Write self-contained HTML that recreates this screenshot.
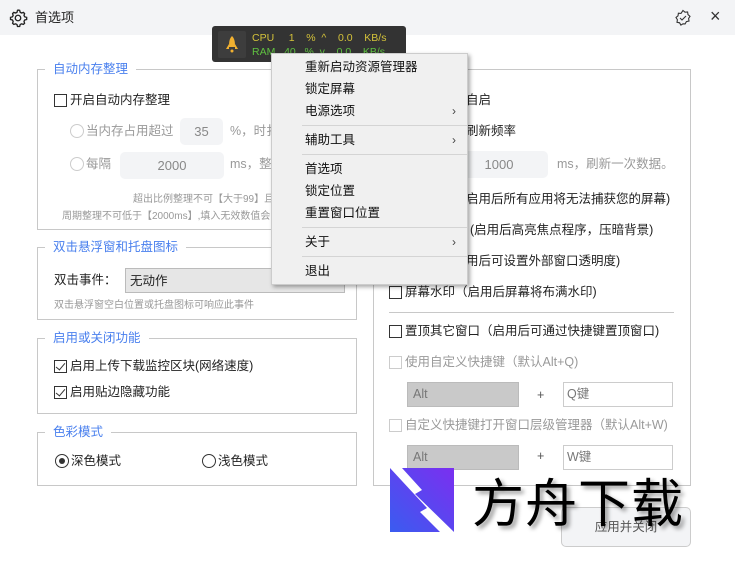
<!DOCTYPE html>
<html><head><meta charset="utf-8"><style>
*{margin:0;padding:0;box-sizing:border-box}
body{width:735px;height:579px;background:#fff;font-family:"Liberation Sans","Noto Sans CJK SC",sans-serif;font-size:12.5px;line-height:16px;color:#222;position:relative;overflow:hidden}
.a{position:absolute;white-space:nowrap}
.hdr{position:absolute;left:0;top:0;width:735px;height:35px;background:#f3f4f6}
.grp{position:absolute;border:1px solid #c8c8c8}
.gt{position:absolute;background:#fff;color:#4a80ee;font-size:12.5px;padding:0 8px;white-space:nowrap}
.cb{position:absolute;width:13px;height:13px;border:1px solid #333;background:#fff}
.cb.g{border-color:#ccc}
.cb.k::after{content:"";position:absolute;left:3px;top:0px;width:4px;height:8px;border:solid #333;border-width:0 1.3px 1.3px 0;transform:rotate(40deg)}
.rd{position:absolute;width:14px;height:14px;border:1px solid #333;border-radius:50%;background:#fff}
.rd.g{border-color:#ccc}
.rd.on::after{content:"";position:absolute;left:3px;top:3px;width:6px;height:6px;border-radius:50%;background:#333}
.inp{position:absolute;background:#f3f4f6;border-radius:5px;color:#888;text-align:center;font-size:13px}
.gray{color:#999}
.menu{position:absolute;left:271px;top:53px;width:197px;height:232px;background:#f0f0f0;border:1px solid #ccc;box-shadow:2px 2px 4px rgba(0,0,0,.35)}
.mi{position:absolute;left:33px;font-size:12.5px;color:#111}
.ar{position:absolute;left:180px;color:#444;font-size:12px}
.sep{position:absolute;left:30px;width:165px;height:1px;background:#d4d4d4}
.sel{position:absolute;background:#c9c9c9;border:1px solid #bbb;color:#777;padding-left:5px;font-size:12.5px}
.box{position:absolute;border:1px solid #ccc;background:#fff;color:#777;padding-left:3px;font-size:12.5px}
</style></head><body>
<div class="hdr"></div>
<svg class="a" style="left:8px;top:8px" width="20" height="20" viewBox="0 0 24 24" fill="none" stroke="#222" stroke-width="1.6"><path d="M12 2.5l2 .3.6 2.3 1.6.9 2.3-.7 1.4 1.4-.7 2.3.9 1.6 2.3.6v2.6l-2.3.6-.9 1.6.7 2.3-1.4 1.4-2.3-.7-1.6.9-.6 2.3h-2.6l-.6-2.3-1.6-.9-2.3.7-1.4-1.4.7-2.3-.9-1.6-2.3-.6v-2.6l2.3-.6.9-1.6-.7-2.3 1.4-1.4 2.3.7 1.6-.9.6-2.3z"/><circle cx="12" cy="12" r="3.3"/></svg>
<div class="a" style="left:35px;top:10px;font-size:13px">首选项</div>
<svg class="a" style="left:674px;top:9px" width="18" height="18" viewBox="0 0 18 18" fill="none" stroke="#333" stroke-width="1.1"><path d="M9 1.5l2 1.7 2.6-.2.4 2.6 2 1.7-1.4 2.2.4 2.6-2.6.5-1.3 2.3L9 14.8l-2.1 1.3-1.3-2.3-2.6-.5.4-2.6L2 8.5 4 6.8 4.4 4.2 7 4.4z"/><path d="M6 9l2 2 4-4"/></svg>
<div class="a" style="left:710px;top:8px;font-size:18px;color:#333">×</div>

<!-- monitor -->
<div class="a" style="left:212px;top:26px;width:194px;height:36px;background:#333;border-radius:3px"></div>
<div class="a" style="left:218px;top:31px;width:28px;height:27px;background:#3d3d3d;border-radius:2px"></div>
<svg class="a" style="left:225px;top:35px" width="14" height="19" viewBox="0 0 14 19"><path d="M7 1C10 4 10 8 10 12H4C4 8 4 4 7 1z" fill="#f0b030"/><path d="M4 9L1 14h3zM10 9l3 5h-3z" fill="#f0b030"/><circle cx="7" cy="16" r="1.5" fill="#f0b030"/></svg>
<div class="a" style="left:252px;top:32px;color:#d4c23a;font-size:10.5px;line-height:13px">CPU&nbsp;&nbsp;&nbsp;&nbsp;&nbsp;1&nbsp;&nbsp;&nbsp;&nbsp;%&nbsp;&nbsp;^&nbsp;&nbsp;&nbsp;&nbsp;0.0&nbsp;&nbsp;&nbsp;&nbsp;KB/s</div>
<div class="a" style="left:252px;top:46px;color:#5fc040;font-size:10.5px;line-height:13px">RAM&nbsp;&nbsp;&nbsp;40&nbsp;&nbsp;&nbsp;%&nbsp;&nbsp;v&nbsp;&nbsp;&nbsp;&nbsp;0.0&nbsp;&nbsp;&nbsp;&nbsp;KB/s</div>

<!-- left group 1 -->
<div class="grp" style="left:37px;top:69px;width:320px;height:161px"></div>
<div class="gt" style="left:45px;top:61px">自动内存整理</div>
<div class="cb" style="left:54px;top:94px"></div><div class="a" style="left:70px;top:92px">开启自动内存整理</div>
<div class="rd g" style="left:70px;top:124px"></div><div class="a gray" style="left:86px;top:123px">当内存占用超过</div>
<div class="inp" style="left:180px;top:118px;width:43px;height:27px;line-height:27px">35</div>
<div class="a gray" style="left:230px;top:123px">%，时扌</div>
<div class="rd g" style="left:70px;top:157px"></div><div class="a gray" style="left:86px;top:156px">每隔</div>
<div class="inp" style="left:120px;top:152px;width:104px;height:27px;line-height:27px">2000</div>
<div class="a gray" style="left:230px;top:156px">ms，整</div>
<div class="a gray" style="left:133px;top:193px;font-size:10px;line-height:13px">超出比例整理不可【大于99】且</div>
<div class="a gray" style="left:62px;top:210px;font-size:10px;line-height:13px">周期整理不可低于【2000ms】,填入无效数值会</div>

<!-- left group 2 -->
<div class="grp" style="left:37px;top:247px;width:320px;height:73px"></div>
<div class="gt" style="left:45px;top:239px">双击悬浮窗和托盘图标</div>
<div class="a" style="left:54px;top:272px">双击事件：</div>
<div class="a" style="left:125px;top:268px;width:220px;height:25px;background:#e6e6e6;border:1px solid #bbb;padding:4px 4px">无动作</div>
<div class="a gray" style="left:54px;top:299px;font-size:10px;line-height:13px">双击悬浮窗空白位置或托盘图标可响应此事件</div>

<!-- left group 3 -->
<div class="grp" style="left:37px;top:338px;width:320px;height:76px"></div>
<div class="gt" style="left:45px;top:330px">启用或关闭功能</div>
<div class="cb k" style="left:54px;top:360px"></div><div class="a" style="left:70px;top:358px">启用上传下载监控区块(网络速度)</div>
<div class="cb k" style="left:54px;top:386px"></div><div class="a" style="left:70px;top:384px">启用贴边隐藏功能</div>

<!-- left group 4 -->
<div class="grp" style="left:37px;top:432px;width:320px;height:54px"></div>
<div class="gt" style="left:45px;top:424px">色彩模式</div>
<div class="rd on" style="left:55px;top:454px"></div><div class="a" style="left:71px;top:453px">深色模式</div>
<div class="rd" style="left:202px;top:454px"></div><div class="a" style="left:218px;top:453px">浅色模式</div>

<!-- right group -->
<div class="grp" style="left:373px;top:69px;width:318px;height:417px"></div>
<div class="a" style="left:466px;top:92px">自启</div>
<div class="a" style="left:466px;top:123px">刷新频率</div>
<div class="inp" style="left:450px;top:151px;width:98px;height:27px;line-height:27px">1000</div>
<div class="a gray" style="left:557px;top:156px">ms，刷新一次数据。</div>
<div class="a" style="left:466px;top:191px">启用后所有应用将无法捕获您的屏幕)</div>
<div class="a" style="left:470px;top:222px">(启用后高亮焦点程序，压暗背景)</div>
<div class="a" style="left:466px;top:253px">用后可设置外部窗口透明度)</div>
<div class="cb" style="left:389px;top:286px"></div><div class="a" style="left:405px;top:284px">屏幕水印（启用后屏幕将布满水印)</div>
<div class="a" style="left:389px;top:312px;width:285px;height:1px;background:#c8c8c8"></div>
<div class="cb" style="left:389px;top:325px"></div><div class="a" style="left:405px;top:323px">置顶其它窗口（启用后可通过快捷键置顶窗口)</div>
<div class="cb g" style="left:389px;top:356px"></div><div class="a gray" style="left:405px;top:354px">使用自定义快捷键（默认Alt+Q)</div>
<div class="sel" style="left:407px;top:382px;width:112px;height:25px;line-height:23px">Alt</div>
<div class="a" style="left:537px;top:387px;color:#555">+</div>
<div class="box" style="left:563px;top:382px;width:110px;height:25px;line-height:23px">Q键</div>
<div class="cb g" style="left:389px;top:419px"></div><div class="a gray" style="left:405px;top:417px">自定义快捷键打开窗口层级管理器（默认Alt+W)</div>
<div class="sel" style="left:407px;top:445px;width:112px;height:25px;line-height:23px">Alt</div>
<div class="a" style="left:537px;top:448px;color:#555">+</div>
<div class="box" style="left:563px;top:445px;width:110px;height:25px;line-height:23px">W键</div>
<div class="a" style="left:561px;top:507px;width:130px;height:40px;background:#f3f4f6;border:1px solid #ccc;border-radius:5px;text-align:center;line-height:38px;color:#555">应用并关闭</div>

<!-- watermark -->
<svg class="a" style="left:390px;top:468px" width="64" height="64" viewBox="0 0 64 64"><defs><linearGradient id="g" x1="0" y1="1" x2="1" y2="0"><stop offset="0" stop-color="#3a5cf0"/><stop offset="1" stop-color="#7b2ff0"/></linearGradient></defs><rect width="64" height="64" fill="url(#g)"/><path d="M0 0h12l20 22-7 4 39 38H50L30 44l7-4z" fill="#fff"/></svg>
<div class="a" style="left:472px;top:470px;font-size:52px;line-height:60px;font-family:'Noto Sans CJK SC',sans-serif;color:#000;letter-spacing:1px;text-shadow:3px 3px 4px rgba(0,0,0,.4)">方舟下载</div>

<!-- context menu -->
<div class="menu">
<div class="mi" style="top:5px">重新启动资源管理器</div>
<div class="mi" style="top:27px">锁定屏幕</div>
<div class="mi" style="top:49px">电源选项</div><div class="ar" style="top:49px">›</div>
<div class="sep" style="top:71px"></div>
<div class="mi" style="top:78px">辅助工具</div><div class="ar" style="top:78px">›</div>
<div class="sep" style="top:100px"></div>
<div class="mi" style="top:107px">首选项</div>
<div class="mi" style="top:129px">锁定位置</div>
<div class="mi" style="top:151px">重置窗口位置</div>
<div class="sep" style="top:173px"></div>
<div class="mi" style="top:180px">关于</div><div class="ar" style="top:180px">›</div>
<div class="sep" style="top:202px"></div>
<div class="mi" style="top:209px">退出</div>
</div>
</body></html>
